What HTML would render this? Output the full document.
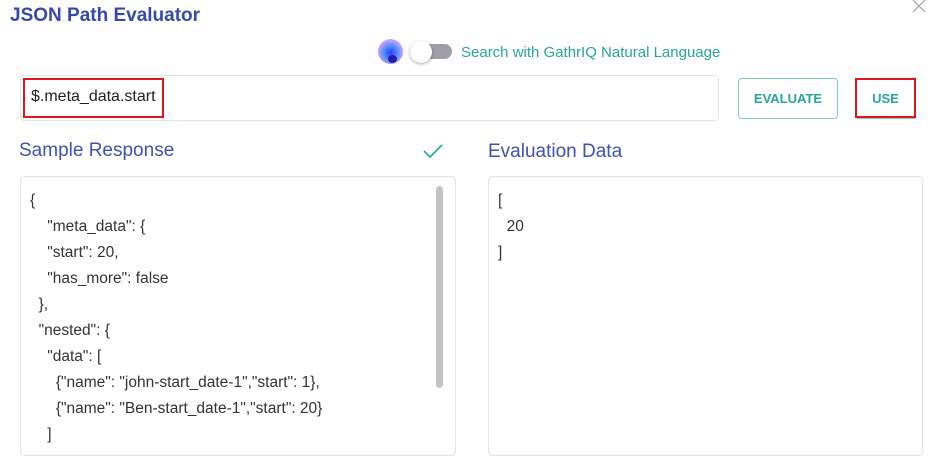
<!DOCTYPE html>
<html><head><style>
*{box-sizing:border-box;margin:0;padding:0}
body{width:935px;height:439px;overflow:hidden;background:#fff;font-family:"Liberation Sans",Roboto,sans-serif;position:relative}
.a{position:absolute}
.code{font-size:15.5px;color:#333;line-height:26px}
</style></head><body>
<div class="a" style="left:10px;top:5px;font-size:19px;font-weight:600;color:#3949ab;">JSON Path Evaluator</div>
<svg class="a" style="left:911px;top:0" width="18" height="14"><path d="M2 0L14 12M14 0L2 12" stroke="#999" stroke-width="1"/></svg>
<div class="a" style="left:378px;top:39px;width:25px;height:25px;border-radius:50%;background:radial-gradient(circle at 50% 55%,#2a39ff 0,#4f8bff 35%,#c7a4ff 70%,#f4d0ff 100%)"></div>
<div class="a" style="left:388px;top:55px;width:9px;height:8px;border-radius:50%;background:#2a1aa8"></div>
<div class="a" style="left:416px;top:44px;width:36px;height:15px;border-radius:8px;background:#9e9ea6"></div>
<div class="a" style="left:410px;top:41px;width:22px;height:22px;border-radius:50%;background:#fff;box-shadow:0 1px 3px rgba(0,0,0,.35)"></div>
<div class="a" style="left:461px;top:44px;font-size:15px;color:#26a69a">Search with GathrIQ Natural Language</div>
<div class="a" style="left:20px;top:75px;width:699px;height:46px;border:1px solid #e4e4e4;border-radius:4px"></div>
<div class="a" style="left:23px;top:78px;width:141px;height:40px;border:2px solid #e0161e"></div>
<div class="a" style="left:31px;top:88px;font-size:16px;color:#222">$.meta_data.start</div>
<div class="a" style="left:738px;top:78px;width:100px;height:41px;border:1px solid #80cbc4;border-radius:4px;color:#26a69a;font-size:13px;font-weight:bold;text-align:center;line-height:39px">EVALUATE</div>
<div class="a" style="left:857px;top:117px;width:58px;height:2px;background:#80cbc4"></div>
<div class="a" style="left:855px;top:78px;width:61px;height:40px;border:2px solid #e0161e;color:#26a69a;font-size:13px;font-weight:bold;text-align:center;line-height:38px">USE</div>
<div class="a" style="left:19px;top:140px;font-size:19px;color:#3f51b5">Sample Response</div>
<svg class="a" style="left:423px;top:143px" width="20" height="16"><path d="M1 8L7 14L19 2" stroke="#26a69a" stroke-width="1.6" fill="none"/></svg>
<div class="a" style="left:488px;top:141px;font-size:19px;color:#3f51b5">Evaluation Data</div>
<div class="a" style="left:20px;top:176px;width:436px;height:280px;border:1px solid #e4e4e4;border-radius:4px"></div>
<div class="a" style="left:436px;top:186px;width:7px;height:202px;border-radius:4px;background:#c4c4c4"></div>
<div class="a" style="left:488px;top:176px;width:435px;height:280px;border:1px solid #e4e4e4;border-radius:4px"></div>
<pre class="a code" style="left:30px;top:188px;font-family:inherit">{
    "meta_data": {
    "start": 20,
    "has_more": false
  },
  "nested": {
    "data": [
      {"name": "john-start_date-1","start": 1},
      {"name": "Ben-start_date-1","start": 20}
    ]</pre>
<pre class="a code" style="left:498px;top:188px;font-family:inherit">[
  20
]</pre>
</body></html>
